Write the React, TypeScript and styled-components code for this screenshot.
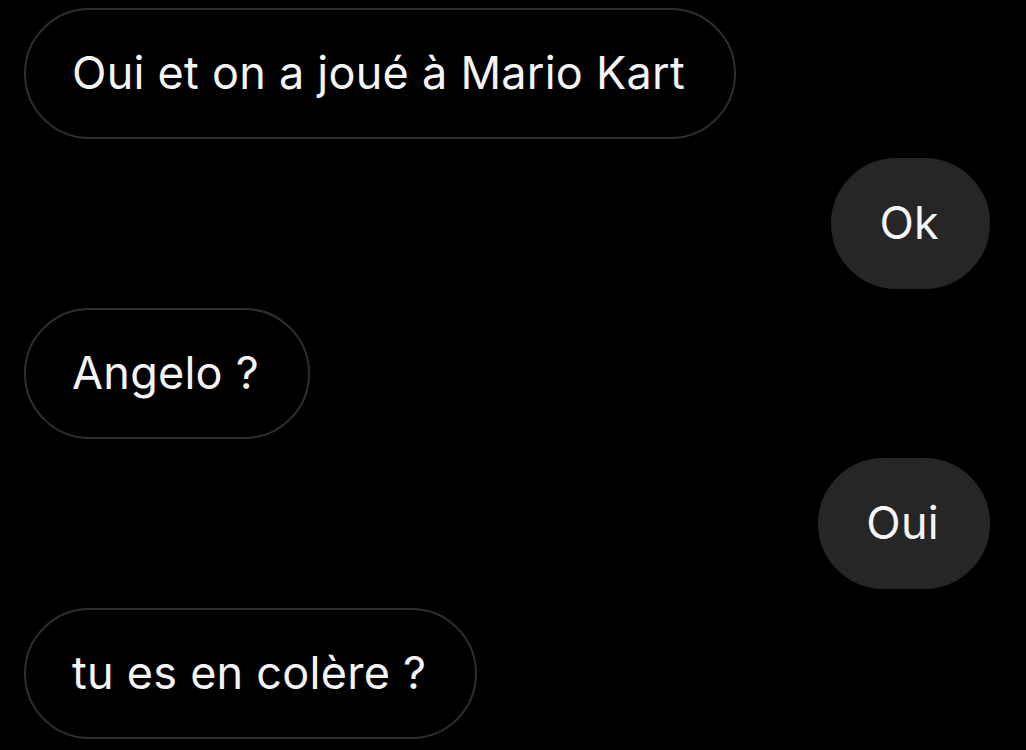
import React from "react";
import styled, { createGlobalStyle } from "styled-components";

const Global = createGlobalStyle`
  html, body {
    margin: 0;
    padding: 0;
    background: #000;
  }
  body {
    font-family: Inter, "Noto Sans", "Liberation Sans", sans-serif;
    -webkit-font-smoothing: antialiased;
  }
`;

const Thread = styled.div`
  display: flex;
  flex-direction: column;
  gap: 19px;
  padding: 8px 36px 0 24px;
  width: 1026px;
  height: 750px;
  box-sizing: border-box;
  background: #000;
  overflow: hidden;
`;

const Row = styled.div<{ $mine?: boolean }>`
  display: flex;
  justify-content: ${(p) => (p.$mine ? "flex-end" : "flex-start")};
`;

const Bubble = styled.div<{ $mine?: boolean }>`
  box-sizing: border-box;
  height: 131px;
  display: flex;
  align-items: center;
  padding: 0 49px 2px 46px;
  border-radius: 66px;
  font-size: 45px;
  letter-spacing: 0.25px;
  color: #f4f4f4;
  white-space: nowrap;
  background: ${(p) => (p.$mine ? "#262626" : "#000")};
  border: 2px solid ${(p) => (p.$mine ? "#262626" : "#2f2f2f")};
`;

const messages: { text: string; mine?: boolean }[] = [
  { text: "Oui et on a joué à Mario Kart" },
  { text: "Ok", mine: true },
  { text: "Angelo ?" },
  { text: "Oui", mine: true },
  { text: "tu es en colère ?" },
];

export default function App() {
  return (
    <>
      <Global />
      <Thread>
        {messages.map((m, i) => (
          <Row key={i} $mine={m.mine}>
            <Bubble $mine={m.mine}>{m.text}</Bubble>
          </Row>
        ))}
      </Thread>
    </>
  );
}
